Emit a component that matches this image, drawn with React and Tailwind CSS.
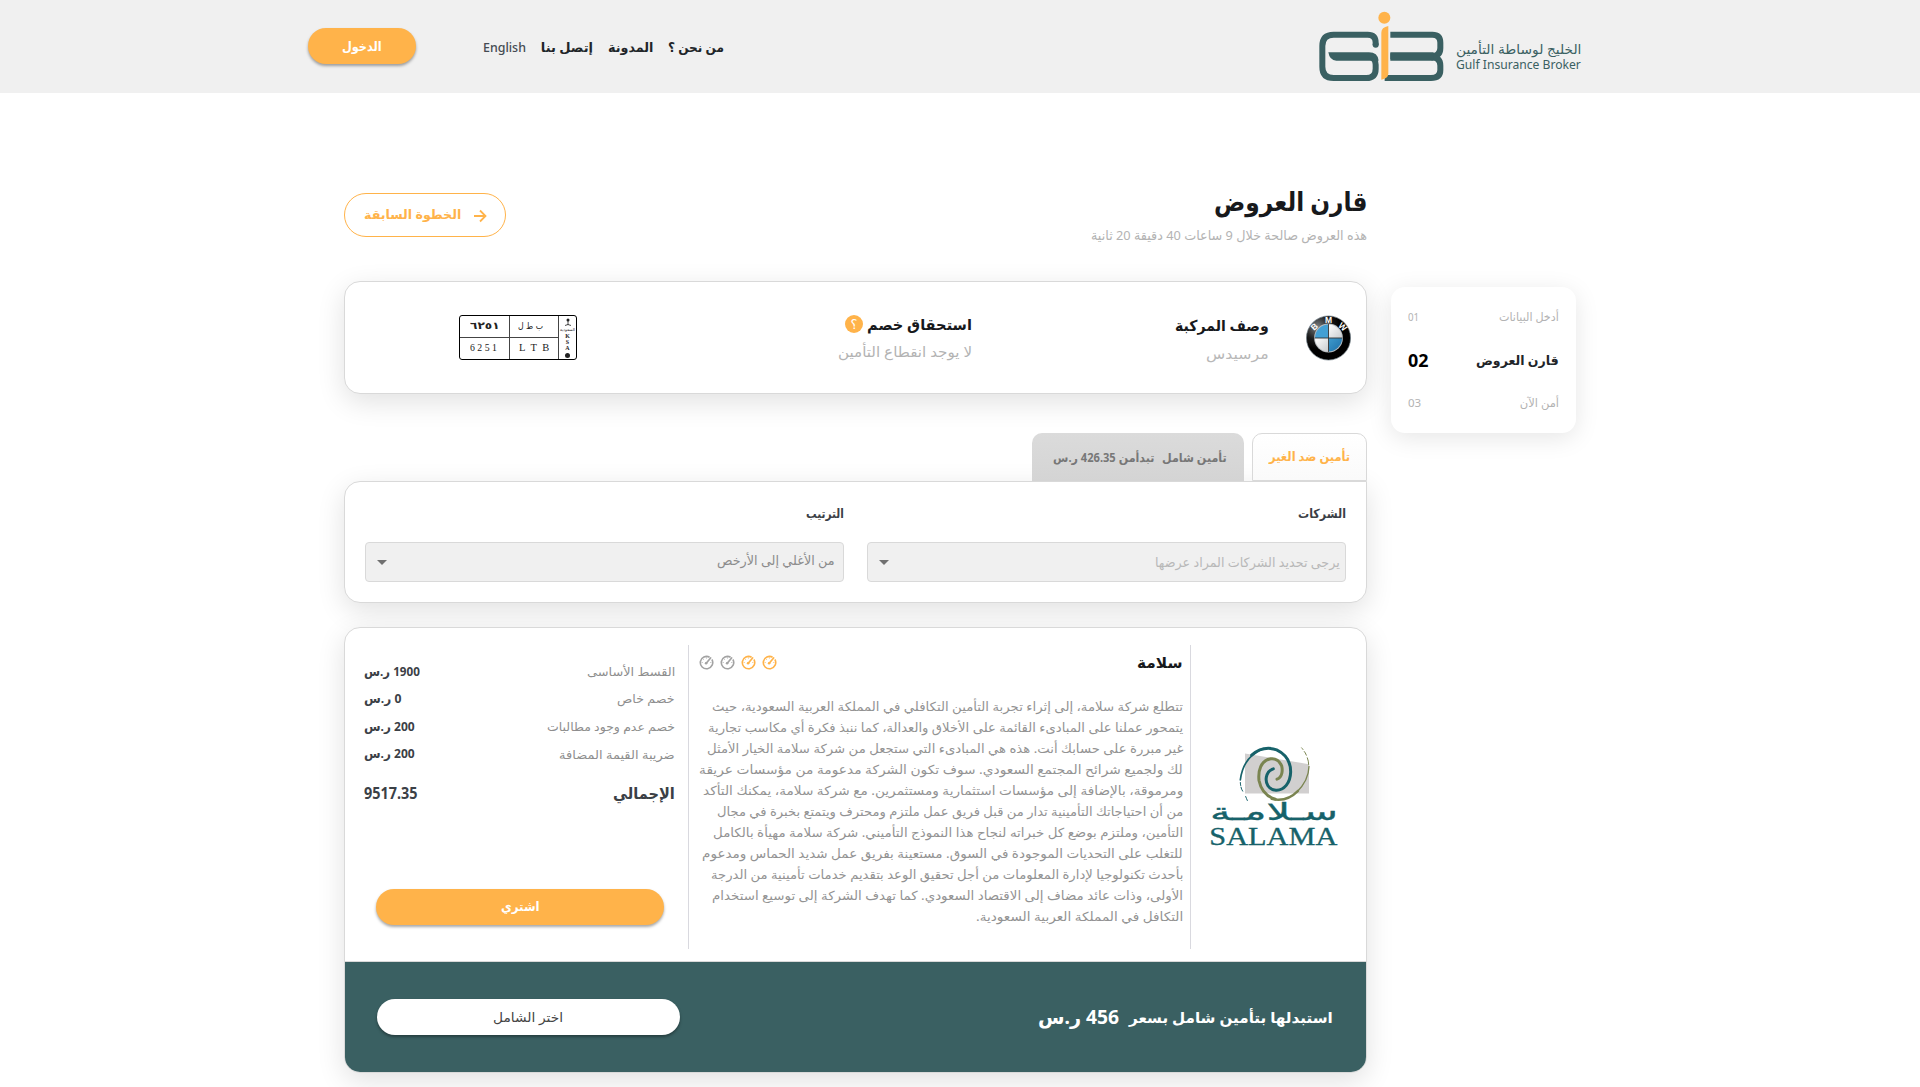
import React, { useLayoutEffect, useRef, useState } from "react";

/* A single line of text, condensed or widened to fill the width of its box. */
function Fit({ className = "", children, ltr = false }) {
  const box = useRef(null);
  const line = useRef(null);
  const [k, setK] = useState(1);
  useLayoutEffect(() => {
    const fit = () => {
      if (line.current.offsetWidth) setK(box.current.clientWidth / line.current.offsetWidth);
    };
    fit();
    if (document.fonts) document.fonts.ready.then(fit);
  }, []);
  return (
    <div ref={box} dir={ltr ? "ltr" : "rtl"} className={"flex shrink-0 items-center leading-none whitespace-nowrap " + className}>
      <span
        ref={line}
        className={"inline-block shrink-0 " + (ltr ? "origin-left" : "origin-right")}
        style={{ transform: `scaleX(${k})` }}
      >
        {children}
      </span>
    </div>
  );
}

function GibLogo() {
  return (
    <svg className="h-[75px] w-[130px]" viewBox="50 25 390 225" fill="none">
      <g stroke="#3a6062" strokeWidth="18">
        <path d="M226 134v-8q0-24-24-24H100q-34 0-34 34v62q0 34 34 34h98q28 0 28-28v-12q0-22-20-24" />
        <path d="M270 102h126q24 0 24 24v16q0 25-28 25H270" />
        <path d="M392 170q28 0 28 25v13q0 24-28 24H253" />
      </g>
      <circle cx="226" cy="132" r="9" fill="#3a6062" />
      <path d="M84 155h122q26 0 29 25H108q-20 0-24-25z" fill="#3a6062" />
      <path d="M270 155h130v25H270z" fill="#3a6062" />
      <path d="M243 237V96q0-16 21-20v142q0 16-21 19z" fill="#ffb34a" />
      <circle cx="252" cy="51" r="18" fill="#ffb34a" />
    </svg>
  );
}

function BmwLogo() {
  return (
    <svg className="h-[46px] w-[45px]" viewBox="0 0 100 100">
      <defs>
        <radialGradient id="ring" cx="0.25" cy="0.25" r="0.5">
          <stop offset="0" stopColor="#7c8184" />
          <stop offset="0.6" stopColor="#1b1b1b" />
          <stop offset="1" stopColor="#000" />
        </radialGradient>
        <linearGradient id="blue" x1="0" y1="0" x2="1" y2="1">
          <stop offset="0" stopColor="#3f9bcd" />
          <stop offset="1" stopColor="#1d6fa8" />
        </linearGradient>
        <linearGradient id="silver" x1="0" y1="0" x2="1" y2="1">
          <stop offset="0" stopColor="#fff" />
          <stop offset="1" stopColor="#c9cccf" />
        </linearGradient>
      </defs>
      <circle cx="50" cy="50" r="49" fill="url(#ring)" stroke="#6d7c84" strokeWidth="1.5" />
      <circle cx="50" cy="50" r="32" fill="#b9bec1" />
      <path d="M50 50V20A30 30 0 0 0 20 50z" fill="#44a0d4" />
      <path d="M50 50H80A30 30 0 0 1 50 80z" fill="url(#blue)" />
      <path d="M50 50V20A30 30 0 0 1 80 50z" fill="url(#silver)" />
      <path d="M50 50V80A30 30 0 0 1 20 50z" fill="url(#silver)" />
      <path d="M50 19v62M19 50h62" stroke="#333" strokeWidth="2" />
      <g className="font-['Liberation_Sans'] font-bold" fill="#fff" fontSize="19" textAnchor="middle" direction="ltr">
        <text x="0" y="0" transform="translate(23 30) rotate(-42)">B</text>
        <text x="50" y="17">M</text>
        <text x="0" y="0" transform="translate(77 30) rotate(42)">W</text>
      </g>
    </svg>
  );
}

function SalamaLogo() {
  return (
    <svg className="h-[107px] w-[150px]" viewBox="60 40 450 320" fill="none">
      <path d="M195 71l192 32v88H195z" fill="#d1cfcf" />
      <g strokeLinecap="round">
        <path d="M197 200q2 5 5 12M183 172q1 6 5 12M181 158q0 5 1 9" stroke="#17626a" strokeWidth="3" />
        <path d="M181 150Q190 80 250 56" stroke="#17626a" strokeWidth="5" />
        <path d="M215 76Q250 46 290 60Q332 80 332 126C331 160 312 182 288 181C265 180 256 160 259 142Q263 122 280 117" stroke="#17626a" strokeWidth="9" />
        <path d="M291 148C308 142 308 120 305 108Q294 84 272 87C242 92 234 122 237 152Q246 196 286 208" stroke="#7a8450" strokeWidth="9" />
        <path d="M275 207Q320 218 354 183" stroke="#7a8450" strokeWidth="7" />
        <path d="M350 187Q386 152 387 110" stroke="#7a8450" strokeWidth="4" />
        <path d="M386 104q0-10-4-20M379 76q-3-8-6-11M369 59q-2-3-4-5" stroke="#7a8450" strokeWidth="3" />
      </g>
      <text x="282" y="271" textAnchor="middle" textLength="384" lengthAdjust="spacingAndGlyphs" direction="rtl" fill="#17626a" stroke="#17626a" strokeWidth="1" fontSize="72" className="font-['DejaVu_Sans']">
        سـلامـة
      </text>
      <text x="88" y="347" textLength="384" lengthAdjust="spacingAndGlyphs" fill="#17626a" stroke="#17626a" strokeWidth="1" fontSize="78" direction="ltr" className="font-['Liberation_Serif']">
        SALAMA
      </text>
    </svg>
  );
}

function Gauge({ className }) {
  return (
    <svg className={"size-[15px] " + className} viewBox="0 0 15 15" fill="none" stroke="currentColor">
      <path d="M10.6 2.2A6.2 6.2 0 1 0 12.9 4.5" strokeWidth="1.6" />
      <path d="M7.2 8.2L11.6 3" strokeWidth="1.7" strokeLinecap="round" />
      <circle cx="7.1" cy="8.2" r="1.3" fill="currentColor" stroke="none" />
      <path d="M2.6 7.5h1.2M7.5 2.4v1.2M4 4l.8.8M12.4 7.5h-1.2" strokeWidth="0.7" />
    </svg>
  );
}

function Plate() {
  return (
    <div dir="ltr" className="flex h-[45px] w-[118px] rounded-[3px] border border-black font-['Liberation_Serif','DejaVu_Sans',serif] text-[#222]">
      <div className="grid w-[99px] grid-cols-[50px_49px] grid-rows-2">
        <div className="flex items-center justify-center border-r border-b border-[#444] font-['DejaVu_Sans',sans-serif] text-[10px]">
          <Fit ltr className="w-[29px] font-bold">٦٢٥١</Fit>
        </div>
        <div className="flex items-center justify-center border-r border-b border-[#444] text-[9px]">
          <Fit className="mr-1.5 w-[25px] font-['DejaVu_Sans']">ب ط ل</Fit>
        </div>
        <div className="flex items-center border-r border-[#444] pl-[10px] text-[10.5px]">
          <Fit ltr className="w-[27px]">6 2 5 1</Fit>
        </div>
        <div className="flex items-center justify-center border-r border-[#444] text-[10.5px]">
          <Fit ltr className="w-[30px]">L&nbsp; T&nbsp; B</Fit>
        </div>
      </div>
      <div className="flex flex-1 flex-col items-center pt-0.5 text-[6px] leading-[6px] font-bold">
        <svg className="h-2 w-2 shrink-0" viewBox="0 0 8 8" fill="none" stroke="#222">
          <path d="M4 1v6M1 7.5q3-2 6 0" strokeWidth="0.8" />
          <circle cx="4" cy="2" r="1.5" fill="#222" stroke="none" />
        </svg>
        <span className="font-['DejaVu_Sans'] text-[4px] leading-[7px] font-normal">السعودية</span>
        <span>K</span>
        <span>S</span>
        <span>A</span>
        <span className="mt-[2px] size-[5px] shrink-0 rounded-full bg-[#222]" />
      </div>
    </div>
  );
}

const card = "border border-[#d9d9d9] bg-white shadow-[0_8px_28px_rgba(0,0,0,0.12)]";

const paragraph = [
  ["w-[471px]", "تتطلع شركة سلامة، إلى إثراء تجربة التأمين التكافلي في المملكة العربية السعودية، حيث"],
  ["w-[475px]", "يتمحور عملنا على المبادىء القائمة على الأخلاق والعدالة، كما ننبذ فكرة أي مكاسب تجارية"],
  ["w-[476px]", "غير مبررة على حسابك أنت. هذه هي المبادىء التي ستجعل من شركة سلامة الخيار الأمثل"],
  ["w-[484px]", "لك ولجميع شرائح المجتمع السعودي. سوف تكون الشركة مدعومة من مؤسسات عريقة"],
  ["w-[480px]", "ومرموقة، بالإضافة إلى مؤسسات استثمارية ومستثمرين. مع شركة سلامة، يمكنك التأكد"],
  ["w-[466px]", "من أن احتياجاتك التأمينية تدار من قبل فريق عمل ملتزم ومحترف ويتمتع بخبرة في مجال"],
  ["w-[470px]", "التأمين، وملتزم بوضع كل خبراته لنجاح هذا النموذج التأميني. شركة سلامة مهيأة بالكامل"],
  ["w-[481px]", "للتغلب على التحديات الموجودة في السوق. مستعينة بفريق عمل شديد الحماس ومدعوم"],
  ["w-[472px]", "بأحدث تكنولوجيا لإدارة المعلومات من أجل تحقيق الوعد بتقديم خدمات تأمينية من الدرجة"],
  ["w-[471px]", "الأولى، وذات عائد مضاف إلى الاقتصاد السعودي. كما تهدف الشركة إلى توسيع استخدام"],
  ["w-[207px]", "التكافل في المملكة العربية السعودية."],
];

const prices = [
  ["w-[88px]", "القسط الأساسى", "w-[56px]", "1900 ر.س"],
  ["w-[58px]", "خصم خاص", "w-[37px]", "0 ر.س"],
  ["w-[128px]", "خصم عدم وجود مطالبات", "w-[51px]", "200 ر.س"],
  ["w-[116px]", "ضريبة القيمة المضافة", "w-[51px]", "200 ر.س"],
];

function Header() {
  return (
    <header className="flex h-[93px] items-center justify-between bg-[#f0f0f0] pr-[339px] pl-[308px]">
      <div className="flex items-center gap-[9px] text-[#3a6062]">
        <div className="flex flex-col pt-[19px]">
          <Fit className="h-[16px] w-[125px] text-[13px]">الخليج لوساطة التأمين</Fit>
          <Fit ltr className="h-[14px] w-[125px] text-[13px]">Gulf Insurance Broker</Fit>
        </div>
        <GibLogo />
      </div>
      <div className="flex items-center">
        <nav className="flex items-center gap-[15px] pt-px text-[13px] font-bold text-[#212529]">
          <Fit className="w-[56px]">من نحن ؟</Fit>
          <Fit className="w-[45px]">المدونة</Fit>
          <Fit className="w-[52px]">إتصل بنا</Fit>
          <Fit ltr className="w-[43px] font-medium text-[#444b52]">English</Fit>
        </nav>
        <button className="mr-[67px] mb-[2px] flex h-[36px] w-[108px] items-center justify-center rounded-full bg-[#ffb34a] text-[13px] font-bold text-white shadow-[0_2px_3px_rgba(0,0,0,0.35)]">
          <Fit className="pt-[2px] w-[40px]">الدخول</Fit>
        </button>
      </div>
    </header>
  );
}

function Steps() {
  return (
    <aside className="mt-[6px] flex h-[146px] w-[185px] shrink-0 flex-col justify-between rounded-[14px] bg-white px-[17px] pt-[20px] pb-[20px] text-[#b3b3b3] shadow-[0_5px_24px_rgba(0,0,0,0.1)]">
      <div className="flex h-5 items-center justify-between text-[11.5px]">
        <Fit className="w-[60px]">أدخل البيانات</Fit>
        <Fit ltr className="w-[11px]">01</Fit>
      </div>
      <div className="flex h-5 items-center justify-between text-[13px] font-bold text-[#212529]">
        <Fit className="w-[83px]">قارن العروض</Fit>
        <Fit ltr className="w-[20px] text-[17px] text-black">02</Fit>
      </div>
      <div className="flex h-5 items-center justify-between text-[11.5px]">
        <Fit className="w-[39px]">أمن الآن</Fit>
        <Fit ltr className="w-[13px]">03</Fit>
      </div>
    </aside>
  );
}

function Vehicle() {
  return (
    <section className={"flex h-[113px] rounded-[16px] pr-[15px] " + card}>
      <div className="mt-[33px]">
        <BmwLogo />
      </div>
      <div className="mt-[33px] mr-[37px] w-[297px]">
        <Fit className="h-5 w-[94px] text-[15px] font-bold text-[#17191c]">وصف المركبة</Fit>
        <Fit className="mt-[9px] h-5 w-[63px] text-[14px] text-[#b8b8b8]">مرسيدس</Fit>
      </div>
      <div className="mt-[32px]">
        <div className="flex items-center gap-[4px]">
          <Fit className="h-5 w-[105px] text-[15px] font-bold text-[#17191c]">استحقاق خصم</Fit>
          <span className="flex size-[18px] items-center justify-center rounded-full bg-[#ffb34a] text-[13px] leading-none text-white">؟</span>
        </div>
        <Fit className="mt-[8px] h-5 w-[134px] text-[14px] text-[#b3b3b3]">لا يوجد انقطاع التأمين</Fit>
      </div>
      <div className="mt-[33px] mr-auto ml-[114px]">
        <Plate />
      </div>
    </section>
  );
}

function SelectBox({ label, labelWidth, className, children }) {
  return (
    <div className="w-[479px]">
      <Fit className={"h-5 text-[12.5px] font-bold text-[#3b4046] " + labelWidth}>{label}</Fit>
      <div className="mt-[18px] flex h-[40px] items-center justify-between rounded-[4px] border border-[#d9d9d9] bg-[#f0f0f0] pl-[11px]">
        <div className={className}>{children}</div>
        <svg className="h-[5px] w-[10px]" viewBox="0 0 10 5">
          <path d="M0 0h10L5 5z" fill="#707070" />
        </svg>
      </div>
    </div>
  );
}

function Filters() {
  return (
    <section className="mt-[39px]">
      <div className="flex h-[48px] gap-[8px]">
        <div className="flex w-[115px] items-center justify-center rounded-t-[10px] border border-[#d9d9d9] bg-gradient-to-b from-white to-[#fafafa] pt-px text-[12.5px] font-bold text-[#ffb34a]">
          <Fit className="w-[81px]">تأمين ضد الغير</Fit>
        </div>
        <div className="flex w-[212px] items-center rounded-t-[10px] bg-gradient-to-b from-[#dbdbdb] to-[#d4d4d4] pt-px pr-[17px] text-[12px] font-bold text-[#777]">
          <Fit className="w-[65px]">تأمين شامل</Fit>
          <Fit className="mr-[8px] w-[101px]">تبدأمن 426.35 ر.س</Fit>
        </div>
      </div>
      <div className={"flex h-[122px] justify-between rounded-[16px] rounded-tr-none px-[20px] pt-[22px] " + card}>
        <SelectBox label="الشركات" labelWidth="w-[48px]" className="pt-px pr-[5px] text-[13px] text-[#b8b8b8]">
          <Fit className="w-[185px]">يرجى تحديد الشركات المراد عرضها</Fit>
        </SelectBox>
        <SelectBox label="الترتيب" labelWidth="w-[38px]" className="pr-[8px] pb-1 text-[13px] text-[#8c8c8c]">
          <Fit className="w-[118px]">من الأغلي إلى الأرخص</Fit>
        </SelectBox>
      </div>
    </section>
  );
}

function Offer() {
  return (
    <section className={"mt-[24px] overflow-hidden rounded-[16px] " + card}>
      <div className="flex h-[334px] border-b border-[#d9d9d9]">
        <div className="mt-[17px] flex h-[304px] w-[176px] justify-end border-l border-[#d9d9df] pt-[98px] pl-[9px]">
          <SalamaLogo />
        </div>
        <div className="mt-[17px] h-[304px] w-[502px] border-l border-[#d9d9df] pr-[7px] pl-[10px]">
          <div className="mt-[7px] flex h-5 items-center justify-between">
            <Fit className="w-[46px] text-[15px] font-bold text-[#17191c]">سلامة</Fit>
            <div className="flex gap-[6px] pt-px">
              <Gauge className="text-[#ffb34a]" />
              <Gauge className="text-[#ffb34a]" />
              <Gauge className="text-[#a3a3a3]" />
              <Gauge className="text-[#a3a3a3]" />
            </div>
          </div>
          <div className="mt-[25px] text-[12.5px] text-[#939393]">
            {paragraph.map(([w, text]) => (
              <Fit key={text} className={"h-[21px] " + w}>{text}</Fit>
            ))}
          </div>
        </div>
        <div className="flex-1 pt-[30px] pr-[13px] pl-[19px]">
          {prices.map(([lw, label, vw, value]) => (
            <div key={label} className="flex h-[27.6px] items-center justify-between">
              <Fit className={"text-[12px] text-[#8e8e8e] " + lw}>{label}</Fit>
              <Fit className={"text-[12.5px] font-bold text-[#3b4046] " + vw}>{value}</Fit>
            </div>
          ))}
          <div className="mt-[10.6px] flex h-[28px] items-center justify-between text-[16px] font-bold text-[#3b4046]">
            <Fit className="w-[62px]">الإجمالي</Fit>
            <Fit ltr className="w-[53px]">9517.35</Fit>
          </div>
          <button className="mt-[82px] mr-[11px] flex h-[36px] w-[288px] items-center justify-center rounded-full bg-[#ffb34a] text-[13px] font-bold text-white shadow-[0_2px_3px_rgba(0,0,0,0.35)]">
            <Fit className="w-[39px]">اشتري</Fit>
          </button>
        </div>
      </div>
      <div className="flex h-[110px] items-center bg-[#3a6062] pr-[33px] pl-[32px] text-white">
        <Fit className="mt-px h-6 w-[204px] text-[15px] font-bold">استبدلها بتأمين شامل بسعر</Fit>
        <Fit className="mr-[10px] h-6 w-[81px] text-[19px] font-bold">456 ر.س</Fit>
        <button className="mr-auto flex h-[36px] w-[303px] items-center justify-center rounded-full bg-white text-[13px] text-[#444] shadow-[0_2px_3px_rgba(0,0,0,0.35)]">
          <Fit className="w-[70px]">اختر الشامل</Fit>
        </button>
      </div>
    </section>
  );
}

export default function App() {
  return (
    <div dir="rtl" className="h-[1087px] overflow-hidden bg-white font-['Noto_Sans','DejaVu_Sans',sans-serif]">
      <Header />
      <main className="px-[344px]">
        <div className="flex h-[188px] items-start justify-between pt-[92px] pr-[209px]">
          <div>
            <Fit className="h-8 w-[153px] text-[26px] font-bold text-[#17191c]">قارن العروض</Fit>
            <Fit className="mt-[8px] h-5 w-[276px] text-[13px] text-[#b3b3b3]">هذه العروض صالحة خلال 9 ساعات 40 دقيقة 20 ثانية</Fit>
          </div>
          <button className="mt-[8px] flex h-[44px] w-[162px] items-center rounded-full border border-[#ffb34a] pt-px pr-[18px] text-[12.5px] font-bold text-[#ffb34a]">
            <svg className="size-[14px]" viewBox="0 0 14 14" fill="none" stroke="currentColor" strokeWidth="1.8">
              <path d="M1 7h11.4M7 1.5L12.5 7 7 12.5" />
            </svg>
            <Fit className="mr-[12px] w-[97px]">الخطوة السابقة</Fit>
          </button>
        </div>
        <div className="flex gap-[24px]">
          <Steps />
          <div className="w-[1023px] shrink-0">
            <Vehicle />
            <Filters />
            <Offer />
          </div>
        </div>
      </main>
    </div>
  );
}
